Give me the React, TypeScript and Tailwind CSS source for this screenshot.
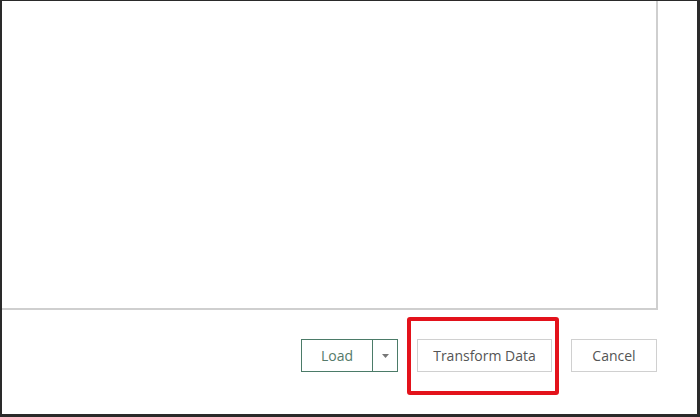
export default function App() {
  return (
    <div
      className="w-[700px] h-[417px] bg-white border-l-2 border-t border-r-[3px] border-b-[3px] border-[#2a2a2a] flex flex-col"
      style={{ fontFamily: '"Open Sans", "Noto Sans", sans-serif' }}
    >
      <div className="h-[309px] w-[656px] shrink-0 border-r-2 border-b-2 border-[#cfcfcf]" />
      <div className="flex items-start pt-[29px] pl-[299px] text-[14px] text-[#555]">
        <div className="flex h-[33px] w-[97px] border border-[#4b7b68] text-[#557a6a]">
          <div className="flex-1 flex items-center justify-center border-r border-[#4b7b68]">Load</div>
          <div className="w-[24px] flex items-center justify-center">
            <svg width="7" height="4" viewBox="0 0 7 4">
              <path d="M0 0h7L3.5 4z" fill="#777" />
            </svg>
          </div>
        </div>
        <div className="relative ml-[19px]">
          <div className="h-[33px] w-[135px] border border-[#d0d0d0] flex items-center justify-center">
            Transform Data
          </div>
          <div className="absolute -left-[10px] -right-[7px] -top-[22px] -bottom-[23px] border-4 border-[#e3121b] rounded-[3px]" />
        </div>
        <div className="ml-[19px] h-[33px] w-[86px] border border-[#d0d0d0] flex items-center justify-center">
          Cancel
        </div>
      </div>
    </div>
  );
}
